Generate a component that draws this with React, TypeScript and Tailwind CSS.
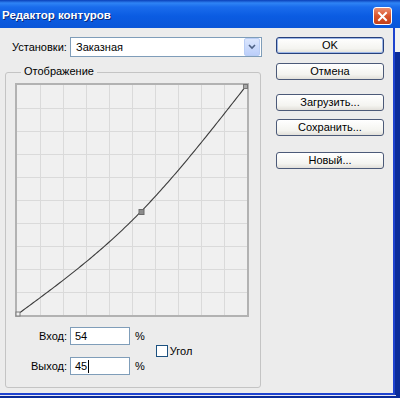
import React from "react";

function S(u: number): number {
  if (u <= 0.54) return 0.3355 * u * u * u + 0.7355 * u;
  const w = 1 - u;
  return 0.3938 * w * w * w + 0.895 * w + 2.1739 * (u - 0.54);
}

function Graph() {
  const pts = Array.from({ length: 121 }, (_, i) => {
    const u = i / 120;
    return `${(3 + u * 228).toFixed(2)},${(231 - S(u) * 228).toFixed(2)}`;
  }).join(" ");
  const lines = [1, 2, 3, 4, 5, 6, 7, 8, 9].map((k) => 2 + 23 * k + 0.5);
  return (
    <svg width={234} height={234} className="block">
      <rect x={0} y={0} width={234} height={234} fill="#f0f0f0" />
      {lines.map((p) => (
        <g key={p}>
          <line x1={p} y1={2} x2={p} y2={232} stroke="#dadada" strokeWidth={1} />
          <line x1={2} y1={p} x2={232} y2={p} stroke="#dadada" strokeWidth={1} />
        </g>
      ))}
      <rect x={1} y={1} width={232} height={232} fill="none" stroke="#b2b2b2" strokeWidth={2} />
      <polyline points={pts} fill="none" stroke="#3c3c3c" strokeWidth={1.1} />
      <rect x={1} y={229} width={4} height={4} fill="#f0f0f0" stroke="#7a7a7a" strokeWidth={1} />
      <rect x={228.5} y={1.5} width={4} height={4} fill="#a8a8a8" stroke="#777" strokeWidth={1} />
      <rect x={124} y={126.5} width={5} height={5} fill="#8c8c8c" stroke="#6a6a6a" strokeWidth={1} />
    </svg>
  );
}

function Btn({ children, def, className }: { children: React.ReactNode; def?: boolean; className?: string }) {
  return (
    <div
      className={`h-[17px] rounded-[3px] border flex items-center justify-center text-[11px] leading-none text-black bg-[linear-gradient(to_bottom,#ffffff,#f4f4f0_70%,#e2e0da)] ${
        def ? "border-[#26407c] shadow-[inset_0_0_0_1px_#9db7e8]" : "border-[#4c5a78]"
      } ${className ?? ""}`}
    >
      {children}
    </div>
  );
}

export default function App() {
  return (
    <div className="w-[400px] h-[398px] overflow-hidden bg-[#0b2c9a] font-['Liberation_Sans',Arial,sans-serif] flex flex-col">
      {/* title bar */}
      <div className="h-[28px] shrink-0 flex items-center pt-[4px] pl-[2px] pr-[8px] bg-[linear-gradient(to_bottom,#0a3fb8_0px,#2f84f5_3px,#1a6cec_7px,#0b5ce2_16px,#0a56d8_28px)]">
        <span className="flex-1 text-white font-bold text-[11.5px] leading-none [text-shadow:1px_1px_0_#0a2a7a]">
          Редактор контуров
        </span>
        <div className="w-[19px] h-[18px] rounded-[3px] border border-white bg-[linear-gradient(to_bottom,#ec8e70,#d9542c_50%,#c2401a)] flex items-center justify-center">
          <svg width="11" height="11" viewBox="0 0 11 11">
            <path d="M2 2 L9 9 M9 2 L2 9" stroke="white" strokeWidth="2" strokeLinecap="square" />
          </svg>
        </div>
      </div>

      {/* body */}
      <div className="flex h-[365px] shrink-0">
        <div className="w-[393px] bg-[#ececec] flex text-[11px] text-black">
          {/* left column */}
          <div className="w-[262px] flex flex-col">
            <div className="flex items-center mt-[9px] pl-[12px]">
              <span className="w-[58px] leading-none">Установки:</span>
              <div className="w-[192px] h-[20px] border border-[#7f9db9] bg-white flex items-center">
                <span className="flex-1 pl-[5px] leading-none">Заказная</span>
                <div className="w-[16px] h-[18px] mr-px rounded-[2px] border border-[#b9cdf5] bg-[linear-gradient(to_bottom,#dbe6fd,#bccffa)] flex items-center justify-center">
                  <svg width="8" height="6" viewBox="0 0 8 6">
                    <path d="M1 1 L4 4 L7 1" stroke="#4d6185" strokeWidth="1.6" fill="none" />
                  </svg>
                </div>
              </div>
            </div>

            {/* group box */}
            <div className="relative ml-[5px] mt-[15px] w-[256px] h-[316px] border border-[#c4c4c4] rounded-[3px] pl-[9px] pt-[10px]">
              <span className="absolute left-[15px] -top-[8px] px-[3px] bg-[#ececec] leading-[13px]">Отображение</span>
              <Graph />
              <div className="flex mt-[10px] -ml-[9px]">
                <div className="flex flex-col gap-[12px]">
                  <div className="flex items-center h-[18px]">
                    <span className="w-[61px] text-right leading-none">Вход:</span>
                    <div className="ml-[3px] w-[60px] h-[18px] border border-[#7f9db9] bg-white flex items-center pl-[4px] leading-none">54</div>
                    <span className="ml-[5px] leading-none">%</span>
                  </div>
                  <div className="flex items-center h-[18px]">
                    <span className="w-[61px] text-right leading-none">Выход:</span>
                    <div className="ml-[3px] w-[60px] h-[18px] border border-[#7f9db9] bg-white flex items-center pl-[4px] leading-none">
                      45<span className="inline-block w-px h-[13px] bg-black ml-px" />
                    </div>
                    <span className="ml-[5px] leading-none">%</span>
                  </div>
                </div>
                <div className="self-center flex items-center ml-[11px]">
                  <div className="w-[12px] h-[12px] border border-[#1c5180] bg-white" />
                  <span className="ml-[2px] leading-none">Угол</span>
                </div>
              </div>
            </div>
          </div>

          {/* right column */}
          <div className="ml-[14px] w-[108px] flex flex-col">
            <Btn def className="mt-[9px]">OK</Btn>
            <Btn className="mt-[9px]">Отмена</Btn>
            <Btn className="mt-[14px]">Загрузить...</Btn>
            <Btn className="mt-[8px]">Сохранить...</Btn>
            <Btn className="mt-[16px]">Новый...</Btn>
          </div>
        </div>
        <div className="flex-1 flex flex-col border-l-2 border-[#1f43cf]">
          <div className="h-[24px] bg-[#f2f2f2]" />
          <div className="flex-1 bg-[#0b2c9a]" />
        </div>
      </div>
      <div className="h-[2px] w-[395px] bg-[#1f43cf] shrink-0" />
      <div className="h-px w-[396px] bg-[#e8e8f4] shrink-0" />
    </div>
  );
}
